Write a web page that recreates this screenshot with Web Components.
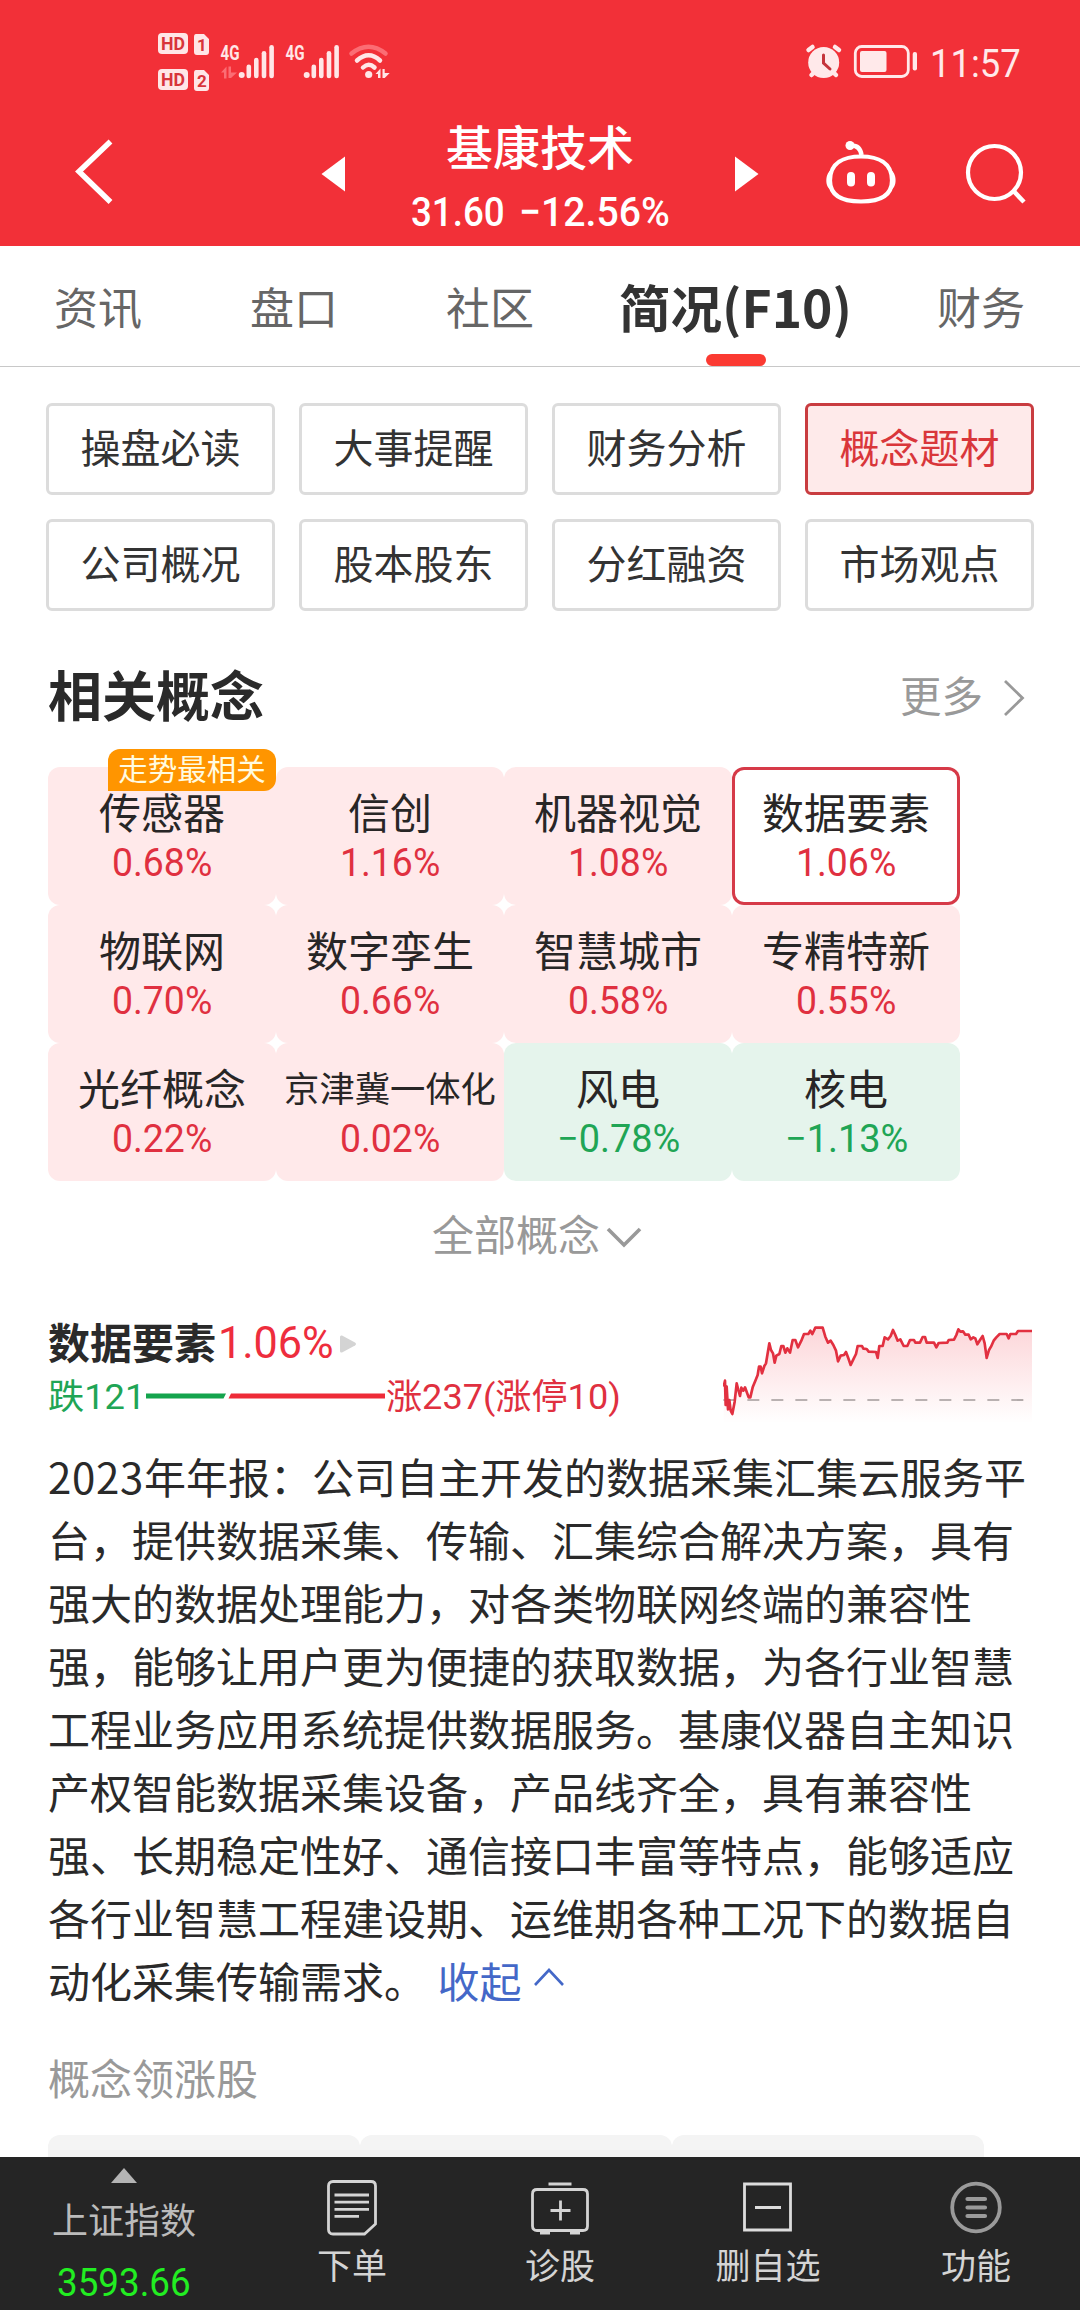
<!DOCTYPE html>
<html lang="zh-CN">
<head>
<meta charset="utf-8">
<title>基康技术 简况(F10)</title>
<style>
html,body{margin:0;padding:0;background:#fff}
body{width:1080px;height:2310px;overflow:hidden;font-family:"Noto Sans CJK SC","Noto Sans",sans-serif;color:#2a2a2a}
</style>
</head>
<body>
<stock-page></stock-page>
<script>
const define = (name, html, setup) => {
  const tpl = document.createElement('template');
  tpl.innerHTML = html;
  customElements.define(name, class extends HTMLElement {
    connectedCallback() {
      if (this.shadowRoot) return;
      this.attachShadow({ mode: 'open' }).append(tpl.content.cloneNode(true));
      if (setup) setup(this, this.shadowRoot);
    }
  });
};

/* Condensed numerals: the slotted text is scaled horizontally to the width in "w". */
define('fit-text', `
<style>
:host{display:inline-block;white-space:nowrap;font-family:Roboto,"Noto Sans CJK SC",sans-serif}
span{display:inline-block;transform-origin:0 50%}
</style><span><slot></slot></span>`, (el, root) => {
  const w = +el.getAttribute('w'), s = root.querySelector('span');
  el.style.width = w + 'px';
  s.style.transform = 'scaleX(' + w / s.offsetWidth + ')';
});

define('status-bar', `
<style>
:host{display:flex;height:96px;box-sizing:border-box;padding:30px 59px 0 155px;justify-content:space-between;align-items:flex-start;color:#ffe9ea}
svg{display:block}
.r{display:flex;align-items:flex-start}
.r svg{margin-top:13px}
.t{font-size:38px;line-height:40px;margin:14px 0 0 13px}
text{font-family:Roboto,sans-serif;font-weight:700}
</style>
<svg width="240" height="62" viewBox="155 30 240 62" fill="#ffe6e7">
  <rect x="158" y="33" width="30" height="21" rx="4"/><rect x="158" y="69" width="30" height="21" rx="4"/>
  <path d="M196 34h8l5 5v13q0 3-3 3h-9q-3 0-3-3v-15q0-3 2-3zM196 70h8l5 5v13q0 3-3 3h-9q-3 0-3-3v-15q0-3 2-3z"/>
  <g fill="#d8343b" font-size="18">
    <text x="161" y="50" textLength="24" lengthAdjust="spacingAndGlyphs">HD</text>
    <text x="161" y="86" textLength="24" lengthAdjust="spacingAndGlyphs">HD</text>
    <text x="197" y="51" font-size="17">1</text><text x="197" y="87" font-size="17">2</text>
  </g>
  <text x="220.500" y="60" font-size="20" textLength="19" lengthAdjust="spacingAndGlyphs">4G</text>
  <text x="285.500" y="60" font-size="20" textLength="19" lengthAdjust="spacingAndGlyphs">4G</text>
  <path fill="#fb6d74" d="M221 72.500l5.500-6v12h-2.500v-6zM228.500 66.500h2.500v6h6l-6 5.500h-2.500z"/>
  <g id="s"><circle cx="241.700" cy="75" r="3"/><rect x="246.500" y="64.500" width="4.600" height="13.700" rx="2.300"/><rect x="254" y="57.700" width="4.600" height="20.500" rx="2.300"/><rect x="261.700" y="51" width="4.600" height="27.200" rx="2.300"/><rect x="269.300" y="45" width="4.600" height="33.200" rx="2.300"/></g>
  <use href="#s" x="65"/>
  <g fill="none" stroke-width="4.500" stroke-linecap="round">
    <path stroke="#fb6d74" d="M351.500 53.500Q368.500 40 385.500 53.500"/>
    <path stroke="#ffe6e7" d="M357 60.500Q368.700 50 380 60.500M363 67.500Q368.700 62 374.500 67.500"/>
  </g>
  <circle cx="368.700" cy="74.500" r="3.600"/>
  <path d="M375.500 74l5-5.500v9.500h-2.500v-4zM382.500 69h2.200v4h5l-5 5h-2.200z"/>
</svg>
<div class="r">
  <svg width="112" height="36" viewBox="805 43 112 36">
    <g stroke="#ffe9ea" stroke-width="4.500" stroke-linecap="round" fill="none"><path d="M808.500 50l4-3M839 50l-4-3M811.500 75l4-4M836 75l-4-4"/></g>
    <circle cx="823.700" cy="62.500" r="15.500" fill="#ffe9ea"/>
    <path d="M823.500 55v8l6.500 6" fill="none" stroke="#c5343b" stroke-width="3" stroke-linecap="round"/>
    <rect x="855.300" y="46.500" width="53" height="30" rx="6.500" fill="none" stroke="#ffe9ea" stroke-width="2.800"/>
    <rect x="860" y="51" width="26.500" height="21" rx="2" fill="#ffe9ea"/>
    <rect x="912.700" y="52" width="4.300" height="18.500" rx="2" fill="#ffe9ea"/>
  </svg>
  <fit-text class="t" w="91">11:57</fit-text>
</div>`);

define('stock-header', `
<style>
:host{display:flex;height:150px;align-items:flex-start;color:#fff}
svg{display:block;flex:none}
.back{margin:42px 205px 0 70px}
.tri{margin-top:60px}
.mid{width:390px;display:flex;flex-direction:column;align-items:center;padding-top:24px}
.name{font-size:47px;line-height:50px;font-weight:500}
.quote{display:flex;gap:14px;margin-top:22px;font-size:41px;line-height:40px;font-weight:500}
.bot{margin:43px 0 0 65px}
.find{margin:46px 0 0 66px}
</style>
<svg class="back" width="46" height="66" viewBox="70 138 46 66"><path d="M110.500 141.500L79 171.500l31.500 30.500" fill="none" stroke="#fff" stroke-width="5.500"/></svg>
<svg class="tri" width="24" height="36"><path d="M24 .5v35L.5 18z" fill="#fff"/></svg>
<div class="mid"><div class="name">基康技术</div><div class="quote"><fit-text w="94">31.60</fit-text><fit-text w="151">−12.56%</fit-text></div></div>
<svg class="tri" width="24" height="36"><path d="M0 .5v35L23.500 18z" fill="#fff"/></svg>
<svg class="bot" width="74" height="68" viewBox="824 139 74 68" fill="none" stroke="#fff" stroke-width="4.200">
  <path d="M861 156.500c17 0 31 6 31 24 0 15-12 21-31 21s-31-6-31-21c0-18 14-24 31-24z"/>
  <path d="M861.500 155c-1-7-5-9.500-10-9.500" stroke-width="4.500"/>
  <circle cx="850" cy="145.500" r="4.500" fill="#fff" stroke="none"/>
  <path d="M832 170c-7 1-8 19 0 20zM890 170c7 1 8 19 0 20z" fill="#fff" stroke="none"/>
  <path d="M851 176v6.500M871 176v6.500" stroke-width="8" stroke-linecap="round"/>
</svg>
<svg class="find" width="62" height="64" viewBox="964 142 62 64" fill="none" stroke="#fff" stroke-width="4.200"><circle cx="994.500" cy="172.500" r="26.500"/><path d="M1013.500 191l10.500 11" stroke-width="4.500"/></svg>`);

define('tab-item', `
<style>
:host{display:flex;flex-direction:column;align-items:center;width:196px;font-size:44px;line-height:62px;color:#666;white-space:nowrap}
:host([active]){width:295px;font-size:51.500px;font-weight:700;color:#333}
i{display:none}
:host([active]) i{display:block;width:60px;height:12px;border-radius:6px;background:#fb3a32;margin-top:17px}
</style><span><slot></slot></span><i></i>`);
define('tab-bar', `
<style>:host{display:flex;height:121px;box-sizing:border-box;padding-top:29px;border-bottom:1px solid #c8c8c8}</style><slot></slot>`);

define('pill-button', `
<style>
:host{display:flex;align-items:center;justify-content:center;box-sizing:border-box;height:92px;padding-bottom:6px;border:3px solid #dcdcdc;border-radius:6px;font-size:40px;color:#333}
:host([active]){background:#feeaea;border-color:#c93c40;color:#d9363a}
</style><slot></slot>`);
define('pill-grid', `
<style>:host{display:grid;grid-template-columns:repeat(4,229px);gap:24px;padding:36px 46px 0}</style><slot></slot>`);

define('section-head', `
<style>
:host{display:flex;justify-content:space-between;align-items:flex-start;height:156px;box-sizing:border-box;padding:53px 53px 0 48px}
h2{margin:0;font-size:54px;line-height:60px;font-weight:700}
.m{display:flex;font-size:41.500px;line-height:60px;color:#999}
svg{margin:15px 0 0 18px}
</style>
<h2><slot></slot></h2><div class="m">更多<svg width="26" height="38" fill="none" stroke="#999" stroke-width="2.800"><path d="M4 2l17.500 17L4 36"/></svg></div>`);

define('concept-tile', `
<style>
:host{display:flex;flex-direction:column;align-items:center;height:138px;box-sizing:border-box;padding-top:24px;border-radius:12px;background:#ffe9ea;position:relative}
:host([down]){background:#e5f4ec}
:host([selected]){background:#fff;box-shadow:inset 0 0 0 3px #d63a48}
.n{font-size:42px;line-height:40px;white-space:nowrap;color:#282626}
:host([small]) .n{font-size:35.300px}
.p{font-size:38.500px;line-height:40px;margin-top:12px;color:#e03040}
:host([down]) .p{color:#20a555}
.b{position:absolute;right:0;top:-18px;width:168px;height:42px;border-radius:12px 12px 12px 0;background:#ff9500;color:#fffbe0;font-size:29.500px;line-height:37px;text-align:center}
</style><div class="n"><slot></slot></div>`, (el, root) => {
  const f = document.createElement('fit-text');
  f.className = 'p';
  f.textContent = el.getAttribute('pct');
  f.setAttribute('w', el.hasAttribute('down') ? 123 : 100);
  root.append(f);
  if (el.getAttribute('badge')) {
    const b = document.createElement('div');
    b.className = 'b';
    b.textContent = el.getAttribute('badge');
    root.append(b);
  }
});
define('concept-grid', `
<style>:host{display:grid;grid-template-columns:repeat(4,228px);padding-left:48px}</style><slot></slot>`);

define('expand-link', `
<style>
:host{display:flex;padding:27px 0 0 432px;font-size:42px;line-height:50px;color:#999}
svg{margin:17px 0 0 5px}
</style><slot></slot><svg width="38" height="24" fill="none" stroke="#999" stroke-width="3.600"><path d="M3 4l16 16L35 4"/></svg>`);

define('spark-line', `
<style>:host{display:block}svg{display:block}</style>
<svg width="310" height="112" viewBox="129 75 930 336">
  <defs><linearGradient id="g" x1="0" y1="105" x2="0" y2="400" gradientUnits="userSpaceOnUse"><stop offset="0" stop-color="#f22d3d" stop-opacity=".2"/><stop offset="1" stop-color="#f22d3d" stop-opacity="0"/></linearGradient></defs>
  <path id="a" fill="url(#g)"/>
  <path d="M130 330h926" stroke="#a39a9b" stroke-width="5" stroke-dasharray="36 36"/>
  <path id="l" fill="none" stroke="#e23040" stroke-width="8" stroke-linejoin="round"/>
</svg>`, (el, root) => {
  const p = '131,290 135,272 137,345 140,290 144,358 148,330 152,362 157,372 164,335 170,280 175,300 180,318 184,293 190,302 195,292 201,308 206,322 211,322 218,292 227,270 233,255 237,230 242,230 246,250 253,228 258,220 263,190 268,160 273,180 279,190 284,218 289,197 298,192 304,168 310,168 316,188 322,175 330,188 338,150 346,150 354,172 364,152 372,132 385,132 391,122 397,132 406,113 428,113 436,140 444,158 452,152 460,165 468,182 474,214 482,197 492,195 498,186 505,205 512,225 520,208 528,192 533,168 546,168 550,176 560,177 566,185 588,186 593,204 598,168 608,168 614,142 624,148 632,138 639,120 646,135 653,152 661,148 671,168 682,168 690,150 702,150 706,158 720,158 728,141 735,141 740,158 762,158 769,172 776,159 802,158 806,150 822,149 829,135 835,118 841,125 849,124 856,134 866,134 872,148 880,142 886,145 892,163 900,150 908,138 914,160 920,204 927,180 933,170 941,152 949,142 959,132 980,132 986,145 991,132 1008,132 1014,123 1056,123';
  root.getElementById('l').setAttribute('d', 'M' + p);
  root.getElementById('a').setAttribute('d', 'M' + p + ' 1056,400 131,400z');
});

define('concept-detail', `
<style>
:host{display:flex;justify-content:space-between;align-items:flex-start;height:112px;padding:57px 47px 0 48px}
.a,.b{display:flex}
.a{font-size:42px;line-height:52px}
b{font-weight:700}
.pct{font-size:45px;color:#ee2d3d;margin:2px 0 -2px 2px}
.a svg{margin:19px 0 0 6px}
.b{margin-top:8px;font-size:35px;line-height:38px}
.b fit-text{font-size:35.500px;margin-top:3px}
.d{color:#20a555}.u{color:#e03040}
.b svg{margin:18px 1px 0 1px}
</style>
<div>
 <div class="a"><b>数据要素</b><fit-text class="pct" w="116">1.06%</fit-text><svg width="18" height="20"><path d="M2 1.500l13 7q2 1.500 0 3l-13 7q-2 .5-2-1.500v-14q0-2 2-1.500z" fill="#d4d4d4"/></svg></div>
 <div class="b"><fit-text class="d" w="97">跌121</fit-text><svg width="239" height="6"><path d="M0 .5h80l-2.500 5H0z" fill="#14a44d"/><path d="M85 .5h154v5H82.500z" fill="#ee2b38"/></svg><fit-text class="u" w="235">涨237(涨停10)</fit-text></div>
</div>
<spark-line></spark-line>`);

define('article-text', `
<style>
:host{display:block;padding:17px 0 0 48px;font-size:42px;line-height:63px;color:#2a2a2a}
::slotted(div){white-space:nowrap}
</style><slot></slot>`);
define('fold-link', `
<style>:host{color:#4468c8;margin-left:2px}svg{margin-left:12px;vertical-align:10px}</style><slot></slot><svg width="32" height="20" fill="none" stroke="#4468c8" stroke-width="2.600"><path d="M2 17L16 2l14 15"/></svg>`);

define('leader-cards', `
<style>
:host{display:block;padding:41px 0 0 48px}
.t{font-size:42px;line-height:50px;color:#999}
.c{display:grid;grid-template-columns:repeat(3,312px);margin-top:33px}
.c i{height:60px;border-radius:12px;background:#f4f4f4}
</style><div class="t"><slot></slot></div><div class="c"><i></i><i></i><i></i></div>`);

define('nav-item', `
<style>
:host{display:flex;flex-direction:column;align-items:center;width:208px;color:#d4d4d4;font-size:35px;line-height:40px}
div{height:65px;margin-top:22px}
</style><div><slot name="icon"></slot></div><slot></slot>`);
define('bottom-nav', `
<style>
:host{display:flex;height:153px;background:#252525;overflow:hidden}
svg{display:block}
.idx{width:248px;display:flex;flex-direction:column;align-items:center;color:#bbb;font-size:36px;line-height:40px}
.idx svg{margin:11px 0 15px}
.v{font-size:39.500px;margin-top:25px;color:#22ee22}
</style>
<div class="idx"><svg width="26" height="15"><path d="M13 0l13 15H0z" fill="#b4b4b4"/></svg><span>上证指数</span><fit-text class="v" w="134">3593.66</fit-text></div>
<nav-item><svg slot="icon" width="52" height="58" viewBox="0 0 52 58" fill="none" stroke="#d4d4d4" stroke-width="2.800"><path d="M7 2.500h38q4.500 0 4.500 4.500v38L38.500 55H7q-4.500 0-4.500-4.500V7Q2.500 2.500 7 2.500z"/><path d="M8.500 16H43M8.500 23.200H43M8.500 30.300H43M8.500 37.400H33"/></svg>下单</nav-item>
<nav-item><svg slot="icon" width="60" height="60" viewBox="0 0 60 60" fill="none" stroke="#d4d4d4" stroke-width="2.800"><path d="M18.500 5h23M7 10.500h46q4.500 0 4.500 4.500v32q0 4.500-4.500 4.500H7q-4.500 0-4.500-4.500V15q0-4.500 4.500-4.500zM20.500 31.500h20M30.500 21.500v20"/><path d="M10 53.500h10M40 53.500h10" stroke-width="4"/></svg>诊股</nav-item>
<nav-item><svg slot="icon" width="52" height="58" viewBox="0 0 52 58" fill="none" stroke="#dcdcdc" stroke-width="2.800"><path d="M2.500 5h46v46h-46zM13 28.500h26"/></svg>删自选</nav-item>
<nav-item><svg slot="icon" width="54" height="58" viewBox="0 0 54 58" fill="none" stroke="#9a9a9a"><circle cx="27" cy="28.500" r="23.800" stroke-width="3.800"/><path d="M18.500 20h17.500M18.500 28.500h17.500M18.500 37h17.500" stroke-width="4.200" stroke-linecap="round"/></svg>功能</nav-item>`);

define('stock-page', `
<style>
:host{display:flex;flex-direction:column;width:1080px;height:2310px}
header{background:#f23038}
main{flex:1;min-height:0;overflow:hidden}
bottom-nav{flex:none}
.yr{letter-spacing:.7px}
</style>
<header><status-bar></status-bar><stock-header></stock-header></header>
<tab-bar><tab-item>资讯</tab-item><tab-item>盘口</tab-item><tab-item>社区</tab-item><tab-item active>简况(F10)</tab-item><tab-item>财务</tab-item></tab-bar>
<main>
<pill-grid><pill-button>操盘必读</pill-button><pill-button>大事提醒</pill-button><pill-button>财务分析</pill-button><pill-button active>概念题材</pill-button><pill-button>公司概况</pill-button><pill-button>股本股东</pill-button><pill-button>分红融资</pill-button><pill-button>市场观点</pill-button></pill-grid>
<section-head>相关概念</section-head>
<concept-grid>
<concept-tile pct="0.68%" badge="走势最相关">传感器</concept-tile><concept-tile pct="1.16%">信创</concept-tile><concept-tile pct="1.08%">机器视觉</concept-tile><concept-tile pct="1.06%" selected>数据要素</concept-tile>
<concept-tile pct="0.70%">物联网</concept-tile><concept-tile pct="0.66%">数字孪生</concept-tile><concept-tile pct="0.58%">智慧城市</concept-tile><concept-tile pct="0.55%">专精特新</concept-tile>
<concept-tile pct="0.22%">光纤概念</concept-tile><concept-tile pct="0.02%" small>京津冀一体化</concept-tile><concept-tile pct="−0.78%" down>风电</concept-tile><concept-tile pct="−1.13%" down>核电</concept-tile>
</concept-grid>
<expand-link>全部概念</expand-link>
<concept-detail></concept-detail>
<article-text><div><span class="yr">2023</span>年年报：公司自主开发的数据采集汇集云服务平</div><div>台，提供数据采集、传输、汇集综合解决方案，具有</div><div>强大的数据处理能力，对各类物联网终端的兼容性</div><div>强，能够让用户更为便捷的获取数据，为各行业智慧</div><div>工程业务应用系统提供数据服务。基康仪器自主知识</div><div>产权智能数据采集设备，产品线齐全，具有兼容性</div><div>强、长期稳定性好、通信接口丰富等特点，能够适应</div><div>各行业智慧工程建设期、运维期各种工况下的数据自</div><div>动化采集传输需求。<fold-link>收起</fold-link></div></article-text>
<leader-cards>概念领涨股</leader-cards>
</main>
<bottom-nav></bottom-nav>`);
</script>
</body>
</html>
